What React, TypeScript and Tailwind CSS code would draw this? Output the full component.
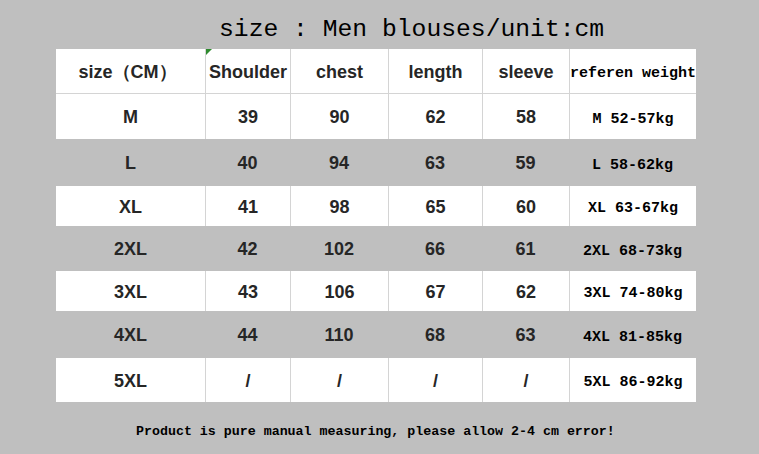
import React from "react";

const rows = [
  { s: "M", v: ["39", "90", "62", "58"], w: "M 52-57kg", white: true, h: "h-[45px]" },
  { s: "L", v: ["40", "94", "63", "59"], w: "L 58-62kg", white: false, h: "h-[47px]" },
  { s: "XL", v: ["41", "98", "65", "60"], w: "XL 63-67kg", white: true, h: "h-[40px]" },
  { s: "2XL", v: ["42", "102", "66", "61"], w: "2XL 68-73kg", white: false, h: "h-[45px]" },
  { s: "3XL", v: ["43", "106", "67", "62"], w: "3XL 74-80kg", white: true, h: "h-[40px]" },
  { s: "4XL", v: ["44", "110", "68", "63"], w: "4XL 81-85kg", white: false, h: "h-[47px]" },
  { s: "5XL", v: ["/", "/", "/", "/"], w: "5XL 86-92kg", white: true, h: "h-[44px]" },
];

const arial = { fontFamily: '"Liberation Sans", Arial, sans-serif' };
const mono = { fontFamily: '"Liberation Mono", "Courier New", monospace' };

export default function App() {
  return (
    <div className="w-[759px] h-[454px] bg-[#bfbfbf] flex flex-col overflow-hidden">
      <div className="h-[49px] flex items-center pl-[219px] pt-[9px]">
        <span className="text-[24.7px] leading-none text-black whitespace-pre" style={mono}>
          size : Men blouses/unit:cm
        </span>
      </div>

      <div className="ml-[56px] w-[640px] flex flex-col">
        {/* header */}
        <div
          className="grid grid-cols-[149px_85px_98px_94px_87px_127px] h-[45px] bg-white border-b border-[#d4d4d4] text-[#262626] font-bold text-[18px]"
          style={arial}
        >
          <div className="flex items-center justify-center pr-[6px] pt-[2px]">size（CM）</div>
          <div className="relative flex items-center justify-center border-l border-[#d4d4d4] pt-[2px]">
            <svg className="absolute left-0 top-0" width="6" height="6" viewBox="0 0 6 6">
              <polygon points="0,0 6,0 0,6" fill="#2e8b2e" />
            </svg>
            Shoulder
          </div>
          <div className="flex items-center justify-center border-l border-[#d4d4d4] pt-[2px]">chest</div>
          <div className="flex items-center justify-center border-l border-[#d4d4d4] pt-[2px]">length</div>
          <div className="flex items-center justify-center border-l border-[#d4d4d4] pt-[2px]">sleeve</div>
          <div
            className="flex items-center justify-center border-l border-[#d4d4d4] text-[15px] text-black whitespace-pre pt-[6px]"
            style={mono}
          >
            referen weight
          </div>
        </div>

        {rows.map((r) => (
          <div
            key={r.s}
            className={`grid grid-cols-[149px_85px_98px_94px_87px_127px] ${r.h} ${
              r.white ? "bg-white" : "bg-[#bfbfbf]"
            } text-[#262626] font-bold text-[18px]`}
            style={arial}
          >
            <div className="flex items-center justify-center pt-[2px]">{r.s}</div>
            {r.v.map((v, i) => (
              <div
                key={i}
                className={`flex items-center justify-center pt-[2px] ${
                  r.white ? "border-l border-[#d4d4d4]" : ""
                }`}
              >
                {v}
              </div>
            ))}
            <div
              className={`flex items-center justify-center text-[15px] text-black whitespace-pre pt-[7px] ${
                r.white ? "border-l border-[#d4d4d4]" : ""
              }`}
              style={mono}
            >
              {r.w}
            </div>
          </div>
        ))}
      </div>

      <div className="flex-1 flex items-center pl-[136px] pt-[7px]">
        <span className="text-[13.3px] font-bold text-black whitespace-pre leading-none" style={mono}>
          Product is pure manual measuring, please allow 2-4 cm error!
        </span>
      </div>
    </div>
  );
}
